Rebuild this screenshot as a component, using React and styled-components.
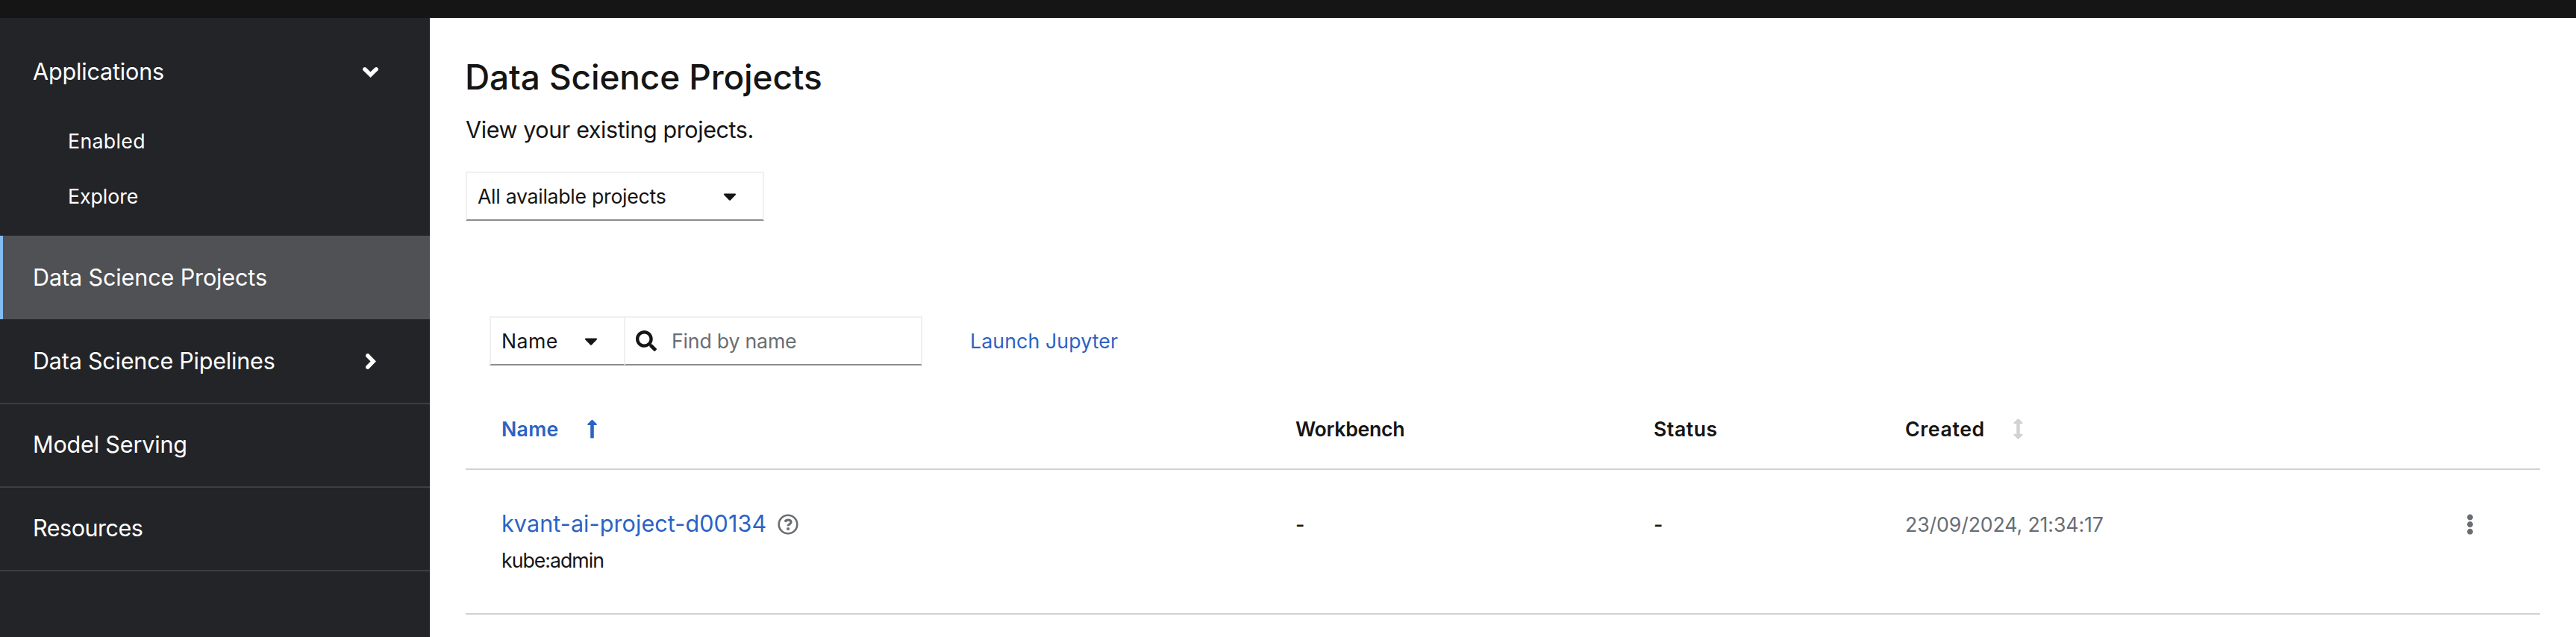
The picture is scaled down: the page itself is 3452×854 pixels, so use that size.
import React, { useState } from "react";
import styled, { createGlobalStyle } from "styled-components";
import { FaCaretDown, FaEllipsisV, FaSearch } from "react-icons/fa";

const GlobalStyle = createGlobalStyle`
  *, *::before, *::after {
    box-sizing: border-box;
  }

  body {
    margin: 0;
    background: #fff;
    color: #151515;
    font-family: Inter, "Open Sans", sans-serif;
    font-size: 26.7px;
    line-height: 42px;
  }

  button, input {
    font: inherit;
    color: inherit;
  }

  svg {
    display: block;
    flex-shrink: 0;
  }
`;

const Page = styled.div`
  display: flex;
  flex-direction: column;
  height: 854px;
  overflow: hidden;
`;

const Masthead = styled.header`
  flex: 0 0 24px;
  background: #151515;
`;

const Body = styled.div`
  flex: 1;
  display: flex;
  min-height: 0;
`;

/* ---------- Sidebar ---------- */
const Sidebar = styled.nav`
  flex: 0 0 576px;
  padding-top: 18px;
  background: #232428;
  color: #fff;
`;

const NavLink = styled.button`
  display: flex;
  align-items: center;
  justify-content: space-between;
  width: 100%;
  height: 112px;
  padding: 0 69px 2px 44px;
  border: 0;
  border-bottom: 2px solid ${(p) => (p.$plain ? "transparent" : "#3c3f42")};
  background: none;
  font-size: 30.5px;
  line-height: 48px;
  letter-spacing: ${(p) => p.$track}px;
  text-align: left;
  cursor: pointer;
`;

const ActiveLink = styled(NavLink)`
  margin-bottom: 2px;
  padding-left: 40px;
  padding-bottom: 0;
  border-bottom: 0;
  border-left: 4px solid #83bcf3;
  background: #505155;
`;

const SubNav = styled.div`
  height: 164px;
  margin-top: -2px;
`;

const SubLink = styled.button`
  display: block;
  width: 100%;
  height: 74px;
  padding: 0 0 0 91px;
  border: 0;
  background: none;
  letter-spacing: ${(p) => p.$track}px;
  text-align: left;
  cursor: pointer;
`;

const Chevron = styled.svg`
  width: 21px;
  height: 21px;
  fill: none;
  stroke: currentColor;
  stroke-width: 5.4;
  stroke-linecap: round;
  transform: rotate(${(p) => (p.$open ? 0 : -90)}deg);
`;

/* ---------- Page header ---------- */
const Main = styled.main`
  flex: 1;
  padding: 48px 48px 0;
`;

const Title = styled.h1`
  margin: 0 0 16px -1px;
  font-size: 46px;
  font-weight: 500;
  line-height: 62px;
  letter-spacing: -0.13px;
`;

const Description = styled.p`
  height: 48px;
  margin: 0 0 32px;
  font-size: 30.5px;
  line-height: 48px;
  letter-spacing: -0.4px;
`;

const Toggle = styled.button`
  display: flex;
  align-items: center;
  justify-content: space-between;
  width: ${(p) => p.$width}px;
  height: 66px;
  padding: 0 ${(p) => p.$right}px 0 14px;
  border: 2px solid #f0f0f0;
  border-bottom-color: #8a8d90;
  background: #fff;
  letter-spacing: ${(p) => p.$track}px;
  cursor: pointer;
`;

/* ---------- Toolbar ---------- */
const Toolbar = styled.div`
  display: flex;
  align-items: center;
  margin: 128px 0 30px;
  padding-left: 32px;
`;

const SearchField = styled.div`
  display: flex;
  align-items: center;
  width: 398px;
  height: 66px;
  padding-left: 14px;
  border: 2px solid #f0f0f0;
  border-left: 0;
  border-bottom-color: #8a8d90;
`;

const SearchInput = styled.input`
  flex: 1;
  min-width: 0;
  margin-left: 20px;
  padding: 0;
  border: 0;
  outline: none;
  letter-spacing: -0.2px;

  &::placeholder {
    color: #6a6e73;
    opacity: 1;
  }
`;

const LinkButton = styled.button`
  margin-left: 64px;
  padding: 0;
  border: 0;
  background: none;
  color: #2b63c5;
  letter-spacing: 0.12px;
  cursor: pointer;
`;

/* ---------- Table ---------- */
const Row = styled.div`
  display: grid;
  grid-template-columns: 1064px 480px 337px 752px 1fr;
  height: ${(p) => (p.$head ? 110 : 194)}px;
  align-items: ${(p) => (p.$head ? "center" : "start")};
  padding-top: ${(p) => (p.$head ? 2 : 48)}px;
  border-bottom: 2px solid #d2d2d2;
`;

const HeadCell = styled.div`
  display: flex;
  align-items: center;
  gap: 38px;
  padding-left: 48px;
  font-weight: 600;
  letter-spacing: ${(p) => p.$track}px;
  color: ${(p) => (p.$sorted ? "#2b63c5" : "#151515")};
`;

const SortIcon = styled.svg`
  width: 13px;
  height: 28px;
  fill: ${(p) => (p.$active ? "#2b63c5" : "#d2d2d2")};
  stroke: ${(p) => (p.$active ? "#2b63c5" : "#d2d2d2")};
  stroke-linejoin: round;
`;

const Cell = styled.div`
  padding: ${(p) => (p.$lead ? 0 : 4)}px 0 0 48px;
`;

const ProjectName = styled.div`
  display: flex;
  align-items: center;
  gap: 15px;
  height: 48px;
  font-size: 30.5px;
  line-height: 48px;
  letter-spacing: 0.1px;
  color: #2b63c5;
`;

const HelpIcon = styled.svg`
  width: 28px;
  height: 28px;
  margin-top: 2px;
  fill: none;
  stroke: #6a6e73;
`;

const Owner = styled.div`
  margin-top: 4px;
  letter-spacing: -1px;
`;

const Dash = styled.div`
  font-weight: 500;
`;

const Timestamp = styled.div`
  color: #6a6e73;
  letter-spacing: -0.12px;
`;

const KebabCell = styled.div`
  padding: 11px 0 0 39px;
  color: #6a6e73;
`;

const projects = [
  {
    name: "kvant-ai-project-d00134",
    owner: "kube:admin",
    created: "23/09/2024, 21:34:17",
  },
];

function NavChevron({ open }) {
  return (
    <Chevron $open={open} viewBox="0 0 21 21">
      <path d="M2.8 6.8 10.5 14.2 18.2 6.8" />
    </Chevron>
  );
}

export default function App() {
  const [appsOpen, setAppsOpen] = useState(true);
  const [filter, setFilter] = useState("");

  const visible = projects.filter((p) => p.name.includes(filter));

  return (
    <Page>
      <GlobalStyle />
      <Masthead />
      <Body>
        <Sidebar>
          <NavLink $plain $track={-0.15} onClick={() => setAppsOpen(!appsOpen)}>
            Applications
            <NavChevron open={appsOpen} />
          </NavLink>
          {appsOpen && (
            <SubNav>
              <SubLink $track={0.35}>Enabled</SubLink>
              <SubLink $track={-0.03}>Explore</SubLink>
            </SubNav>
          )}
          <ActiveLink $track={-0.1}>Data Science Projects</ActiveLink>
          <NavLink $track={-0.2}>
            Data Science Pipelines
            <NavChevron />
          </NavLink>
          <NavLink $track={-0.15}>Model Serving</NavLink>
          <NavLink $track={-0.47}>Resources</NavLink>
        </Sidebar>

        <Main>
          <Title>Data Science Projects</Title>
          <Description>View your existing projects.</Description>
          <Toggle $width={400} $right={30} $track={-0.29}>
            All available projects
            <FaCaretDown size={28} />
          </Toggle>

          <Toolbar>
            <Toggle $width={182} $right={30} $track={0.4}>
              Name
              <FaCaretDown size={28} />
            </Toggle>
            <SearchField>
              <FaSearch size={28} />
              <SearchInput
                placeholder="Find by name"
                value={filter}
                onChange={(e) => setFilter(e.target.value)}
              />
            </SearchField>
            <LinkButton>Launch Jupyter</LinkButton>
          </Toolbar>

          <Row $head>
            <HeadCell $sorted $track={0.3}>
              Name
              <SortIcon $active viewBox="0 0 13 28">
                <path d="M6.5 2.8 11.8 8H1.2Z" strokeWidth="2" />
                <path d="M6.5 8V26.4" strokeWidth="4.6" />
              </SortIcon>
            </HeadCell>
            <HeadCell $track={-0.3}>Workbench</HeadCell>
            <HeadCell $track={0.5}>Status</HeadCell>
            <HeadCell $track={0.6}>
              Created
              <SortIcon viewBox="0 0 13 28">
                <path d="M6.5 1.2 11.6 6.2H1.4Z" strokeWidth="2" />
                <path d="M6.5 6V22" strokeWidth="4.6" />
                <path d="M6.5 26.8 11.6 21.8H1.4Z" strokeWidth="2" />
              </SortIcon>
            </HeadCell>
          </Row>

          {visible.map((p) => (
            <Row key={p.name}>
              <Cell $lead>
                <ProjectName>
                  {p.name}
                  <HelpIcon viewBox="0 0 28 28">
                    <circle cx="14" cy="14" r="12.3" strokeWidth="2.6" />
                    <path
                      d="M9.9 10.6C10.8 9 12.2 8.1 14.2 8.1c2.2 0 3.8 1.2 3.8 3 0 2.9-3.9 2.6-3.9 5.2"
                      strokeWidth="3.2"
                    />
                    <circle cx="14.1" cy="20" r="1.1" strokeWidth="2" />
                  </HelpIcon>
                </ProjectName>
                <Owner>{p.owner}</Owner>
              </Cell>
              <Cell>
                <Dash>-</Dash>
              </Cell>
              <Cell>
                <Dash>-</Dash>
              </Cell>
              <Cell>
                <Timestamp>{p.created}</Timestamp>
              </Cell>
              <KebabCell>
                <FaEllipsisV size={28} />
              </KebabCell>
            </Row>
          ))}
        </Main>
      </Body>
    </Page>
  );
}
